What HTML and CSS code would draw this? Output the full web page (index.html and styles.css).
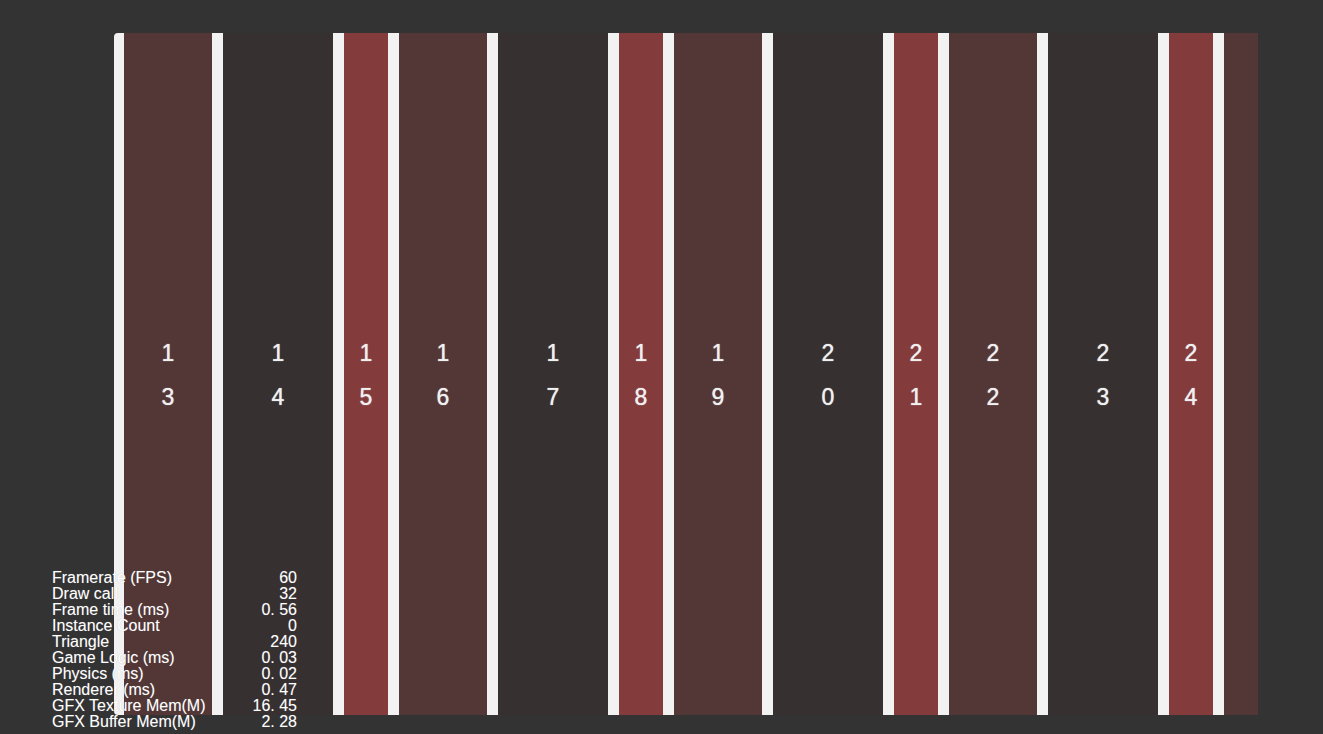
FILE: index.html
```html
<!DOCTYPE html>
<html lang="en">
<head>
<meta charset="utf-8">
<title>Horizontal list</title>
<link rel="stylesheet" href="styles.css">
</head>
<body>
<main class="stage">
  <ol class="list">
    <li class="item medium"><span>1</span><span>3</span></li>
    <li class="item wide"><span>1</span><span>4</span></li>
    <li class="item narrow"><span>1</span><span>5</span></li>
    <li class="item medium"><span>1</span><span>6</span></li>
    <li class="item wide"><span>1</span><span>7</span></li>
    <li class="item narrow"><span>1</span><span>8</span></li>
    <li class="item medium"><span>1</span><span>9</span></li>
    <li class="item wide"><span>2</span><span>0</span></li>
    <li class="item narrow"><span>2</span><span>1</span></li>
    <li class="item medium"><span>2</span><span>2</span></li>
    <li class="item wide"><span>2</span><span>3</span></li>
    <li class="item narrow"><span>2</span><span>4</span></li>
    <li class="item medium"></li>
  </ol>
</main>
<table class="stats">
  <tbody>
    <tr><th scope="row">Framerate (FPS)</th><td>60</td></tr>
    <tr><th scope="row">Draw call</th><td>32</td></tr>
    <tr><th scope="row">Frame time (ms)</th><td>0. 56</td></tr>
    <tr><th scope="row">Instance Count</th><td>0</td></tr>
    <tr><th scope="row">Triangle</th><td>240</td></tr>
    <tr><th scope="row">Game Logic (ms)</th><td>0. 03</td></tr>
    <tr><th scope="row">Physics (ms)</th><td>0. 02</td></tr>
    <tr><th scope="row">Renderer (ms)</th><td>0. 47</td></tr>
    <tr><th scope="row">GFX Texture Mem(M)</th><td>16. 45</td></tr>
    <tr><th scope="row">GFX Buffer Mem(M)</th><td>2. 28</td></tr>
  </tbody>
</table>
</body>
</html>
```

FILE: styles.css
```css
* {
  box-sizing: border-box;
}

body {
  margin: 0;
  background: #333333;
  color: #ffffff;
  font-family: "Liberation Sans", Arial, sans-serif;
}

.stage {
  display: flex;
  height: 100vh;
  padding: 33px 65px 19px 114px;
}

.list {
  display: flex;
  flex: 1;
  gap: 11px;
  min-width: 0;
  margin: 0;
  padding: 0 0 0 10px;
  overflow: hidden;
  list-style: none;
  background: #f2f2f2;
  border-radius: 4px 0 0 4px;
}

.item {
  display: flex;
  flex: none;
  flex-direction: column;
  align-items: center;
  justify-content: center;
  padding-top: 2px;
  color: #f0f0f0;
  font-size: 23px;
  line-height: 44px;
  text-shadow: 0 0 1px #f0f0f0;
}

.medium {
  width: 88px;
  background: #533737;
}

.wide {
  width: 110px;
  background: #363030;
}

.narrow {
  width: 44px;
  background: #833b3c;
}

.stats {
  position: absolute;
  bottom: 4px;
  left: 52px;
  width: 245px;
  border-collapse: collapse;
  font-size: 16px;
  line-height: 16px;
  text-shadow: 0 0 1px rgba(150, 150, 150, 0.5);
}

.stats th,
.stats td {
  padding: 0;
  font-weight: 400;
  text-align: left;
  white-space: nowrap;
}

.stats td {
  text-align: right;
}
```
